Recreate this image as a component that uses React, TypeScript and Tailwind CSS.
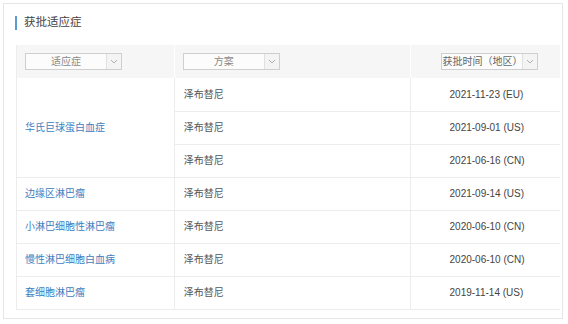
import React from "react";

function Chevron() {
  return (
    <svg width="8" height="5" viewBox="0 0 8 5" className="block">
      <path d="M1 1 L4 4 L7 1" fill="none" stroke="#b0b0b0" strokeWidth="1" />
    </svg>
  );
}

function Select({ label, left = false }: { label: string; left?: boolean }) {
  return (
    <div className="flex h-[17px] w-[97px] border border-[#cfcfcf] bg-[#fcfcfc]">
      <div
        className={
          left
            ? "flex flex-1 items-center overflow-hidden whitespace-nowrap pl-[1px] text-[10px] text-[#666]"
            : "flex flex-1 items-center justify-center overflow-hidden whitespace-nowrap text-[10px] text-[#888]"
        }
      >
        {label}
      </div>
      <div className="flex w-[15px] items-center justify-center border-l border-[#e0e0e0] bg-[#f4f4f4]">
        <Chevron />
      </div>
    </div>
  );
}

const rows = [
  { ind: "边缘区淋巴瘤", date: "2021-09-14 (US)" },
  { ind: "小淋巴细胞性淋巴瘤", date: "2020-06-10 (CN)" },
  { ind: "慢性淋巴细胞白血病", date: "2020-06-10 (CN)" },
  { ind: "套细胞淋巴瘤", date: "2019-11-14 (US)" },
];

export default function App() {
  const font = { fontFamily: '"Liberation Sans", "Noto Sans CJK SC", sans-serif' };
  const td = "h-[33px] border-b border-[#ececec] p-0 align-middle";
  return (
    <div className="h-[324px] w-[568px] bg-white pl-[3px] pt-[3px]" style={font}>
      <div className="h-[316px] w-[560px] border border-[#e6e6e6] bg-white">
        <div className="ml-[11px] mt-[12px] flex h-[14px] items-center">
          <div className="h-[14px] w-[2px] bg-[#5a9bd0]" />
          <div className="ml-[7px] text-[11.5px] leading-none text-[#444]">获批适应症</div>
        </div>
        <table className="ml-[12px] mt-[15px] w-[544px] border-collapse border-b border-l border-[#ececec] text-[10px]">
          <colgroup>
            <col className="w-[158px]" />
            <col className="w-[236px]" />
            <col className="w-[150px]" />
          </colgroup>
          <thead>
            <tr className="h-[33px] bg-[#f6f6f6]">
              <th className="border-r border-white p-0 pl-[8px] font-normal">
                <Select label="适应症" />
              </th>
              <th className="border-r border-white p-0 pl-[8px] font-normal">
                <Select label="方案" />
              </th>
              <th className="p-0 pl-[30px] font-normal">
                <Select label="获批时间（地区）" left />
              </th>
            </tr>
          </thead>
          <tbody className="text-[#555]">
            <tr>
              <td rowSpan={3} className="border-b border-r border-[#ececec] p-0 pl-[8px] align-middle text-[#3d7dbf]">
                华氏巨球蛋白血症
              </td>
              <td className={td + " border-r pl-[9px]"}>泽布替尼</td>
              <td className={td + " pl-[39px] text-[#444]"}>2021-11-23 (EU)</td>
            </tr>
            <tr>
              <td className={td + " border-r pl-[9px]"}>泽布替尼</td>
              <td className={td + " pl-[39px] text-[#444]"}>2021-09-01 (US)</td>
            </tr>
            <tr>
              <td className={td + " border-r pl-[9px]"}>泽布替尼</td>
              <td className={td + " pl-[39px] text-[#444]"}>2021-06-16 (CN)</td>
            </tr>
            {rows.map((r) => (
              <tr key={r.ind}>
                <td className={td + " border-r pl-[8px] text-[#3d7dbf]"}>{r.ind}</td>
                <td className={td + " border-r pl-[9px]"}>泽布替尼</td>
                <td className={td + " pl-[39px] text-[#444]"}>{r.date}</td>
              </tr>
            ))}
          </tbody>
        </table>
      </div>
    </div>
  );
}
